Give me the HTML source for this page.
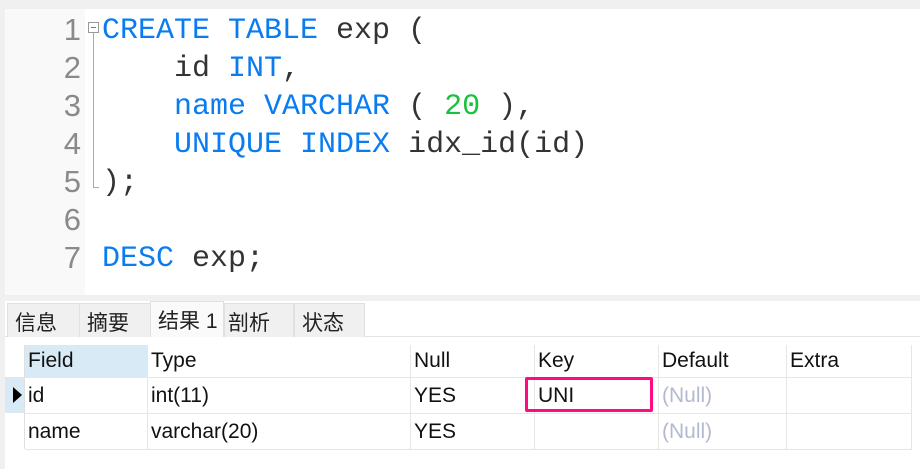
<!DOCTYPE html>
<html><head><meta charset="utf-8"><style>
*{margin:0;padding:0;box-sizing:border-box}
body{width:920px;height:469px;background:#f0f0f0;position:relative;overflow:hidden;font-family:"Liberation Sans","Noto Sans CJK SC",sans-serif}
.ed{position:absolute;left:5px;top:9px;width:915px;height:286px;background:#fff}
.gut{position:absolute;left:0;top:0;width:80px;height:286px;background:#f9f9f9}
.ln{position:absolute;left:0;width:76px;text-align:right;font:31px "Liberation Sans",sans-serif;color:#8a8a8a;line-height:38px}
.code{position:absolute;left:97px;font:30px "Liberation Mono",monospace;color:#333;line-height:38px;white-space:pre}
.k{color:#0a7cf0}.n{color:#17c23c}
.fold{position:absolute;left:83px;top:13px;width:11px;height:11px;border:1px solid #999;background:#fff}
.fold:after{content:"";position:absolute;left:2px;top:4px;width:5px;height:1px;background:#777}
.fl{position:absolute;left:88px;top:24px;width:1px;height:155px;background:#aaa}
.fl2{position:absolute;left:88px;top:178px;width:6px;height:1px;background:#aaa}
.bot{position:absolute;left:5px;top:301px;width:915px;height:168px;background:#fff}
.tabs{position:absolute;left:5px;top:301px;width:915px;height:36px;background:#fff;border-bottom:1px solid #e3e3e3}
.tab{position:absolute;top:2px;height:34px;background:#f0f0f0;border:1px solid #e0e0e0;border-bottom:none;font-size:21px;color:#222;padding:3px 0 0 7px}
.tab.a{background:#fafafa;top:0;height:36px;padding-top:3px}
.g{position:absolute;font-size:21px;color:#111}
.c{position:absolute;padding:6px 0 0 3px;height:100%;border-right:1px solid #e6e6e6}
.row{position:absolute;left:25px;width:887px;border-bottom:1px solid #e6e6e6}
.gr{color:#b3b9cf}
</style></head><body>
<div class="ed">
<div class="gut"></div>
<div class="ln" style="top:2px">1</div>
<div class="ln" style="top:40px">2</div>
<div class="ln" style="top:78px">3</div>
<div class="ln" style="top:116px">4</div>
<div class="ln" style="top:154px">5</div>
<div class="ln" style="top:192px">6</div>
<div class="ln" style="top:230px">7</div>
<div class="fold"></div><div class="fl"></div><div class="fl2"></div>
<div class="code" style="top:3px"><span class="k">CREATE TABLE</span> exp (</div>
<div class="code" style="top:41px">    id <span class="k">INT</span>,</div>
<div class="code" style="top:79px">    <span class="k">name VARCHAR</span> ( <span class="n">20</span> ),</div>
<div class="code" style="top:117px">    <span class="k">UNIQUE INDEX</span> idx_id(id)</div>
<div class="code" style="top:155px">);</div>
<div class="code" style="top:231px"><span class="k">DESC</span> exp;</div>
</div>
<div class="bot"></div>
<div class="tabs">
<div class="tab" style="left:2px;width:73px">信息</div>
<div class="tab" style="left:74px;width:72px">摘要</div>
<div class="tab a" style="left:145px;width:74px">结果 1</div>
<div class="tab" style="left:219px;width:70px;padding-left:3px">剖析</div>
<div class="tab" style="left:289px;width:71px">状态</div>
</div>
<div style="position:absolute;left:5px;top:377px;width:20px;height:36px;background:#d9eaf7"></div>
<div style="position:absolute;left:13px;top:387px;width:0;height:0;border-left:9px solid #000;border-top:8px solid transparent;border-bottom:8px solid transparent"></div>
<div style="position:absolute;left:24px;top:345px;width:1px;height:104px;background:#e0e0e0"></div>
<div class="g row" style="top:345px;height:33px">
<div class="c" style="left:0;width:123px;background:#d9eaf7;padding-top:4px">Field</div>
<div class="c" style="left:123px;width:263px;padding-top:4px">Type</div>
<div class="c" style="left:386px;width:124px;padding-top:4px">Null</div>
<div class="c" style="left:510px;width:124px;padding-top:4px">Key</div>
<div class="c" style="left:634px;width:128px;padding-top:4px">Default</div>
<div class="c" style="left:762px;width:125px;padding-top:4px">Extra</div>
</div>
<div class="g row" style="top:378px;height:36px">
<div class="c" style="left:0;width:123px">id</div>
<div class="c" style="left:123px;width:263px">int(11)</div>
<div class="c" style="left:386px;width:124px">YES</div>
<div class="c" style="left:510px;width:124px">UNI</div>
<div class="c gr" style="left:634px;width:128px">(Null)</div>
<div class="c" style="left:762px;width:125px"></div>
</div>
<div class="g row" style="top:414px;height:36px">
<div class="c" style="left:0;width:123px">name</div>
<div class="c" style="left:123px;width:263px">varchar(20)</div>
<div class="c" style="left:386px;width:124px">YES</div>
<div class="c" style="left:510px;width:124px"></div>
<div class="c gr" style="left:634px;width:128px">(Null)</div>
<div class="c" style="left:762px;width:125px"></div>
</div>
<div style="position:absolute;left:525px;top:377px;width:128px;height:35px;border:3px solid #ff0a80;border-radius:2px"></div>
</body></html>
